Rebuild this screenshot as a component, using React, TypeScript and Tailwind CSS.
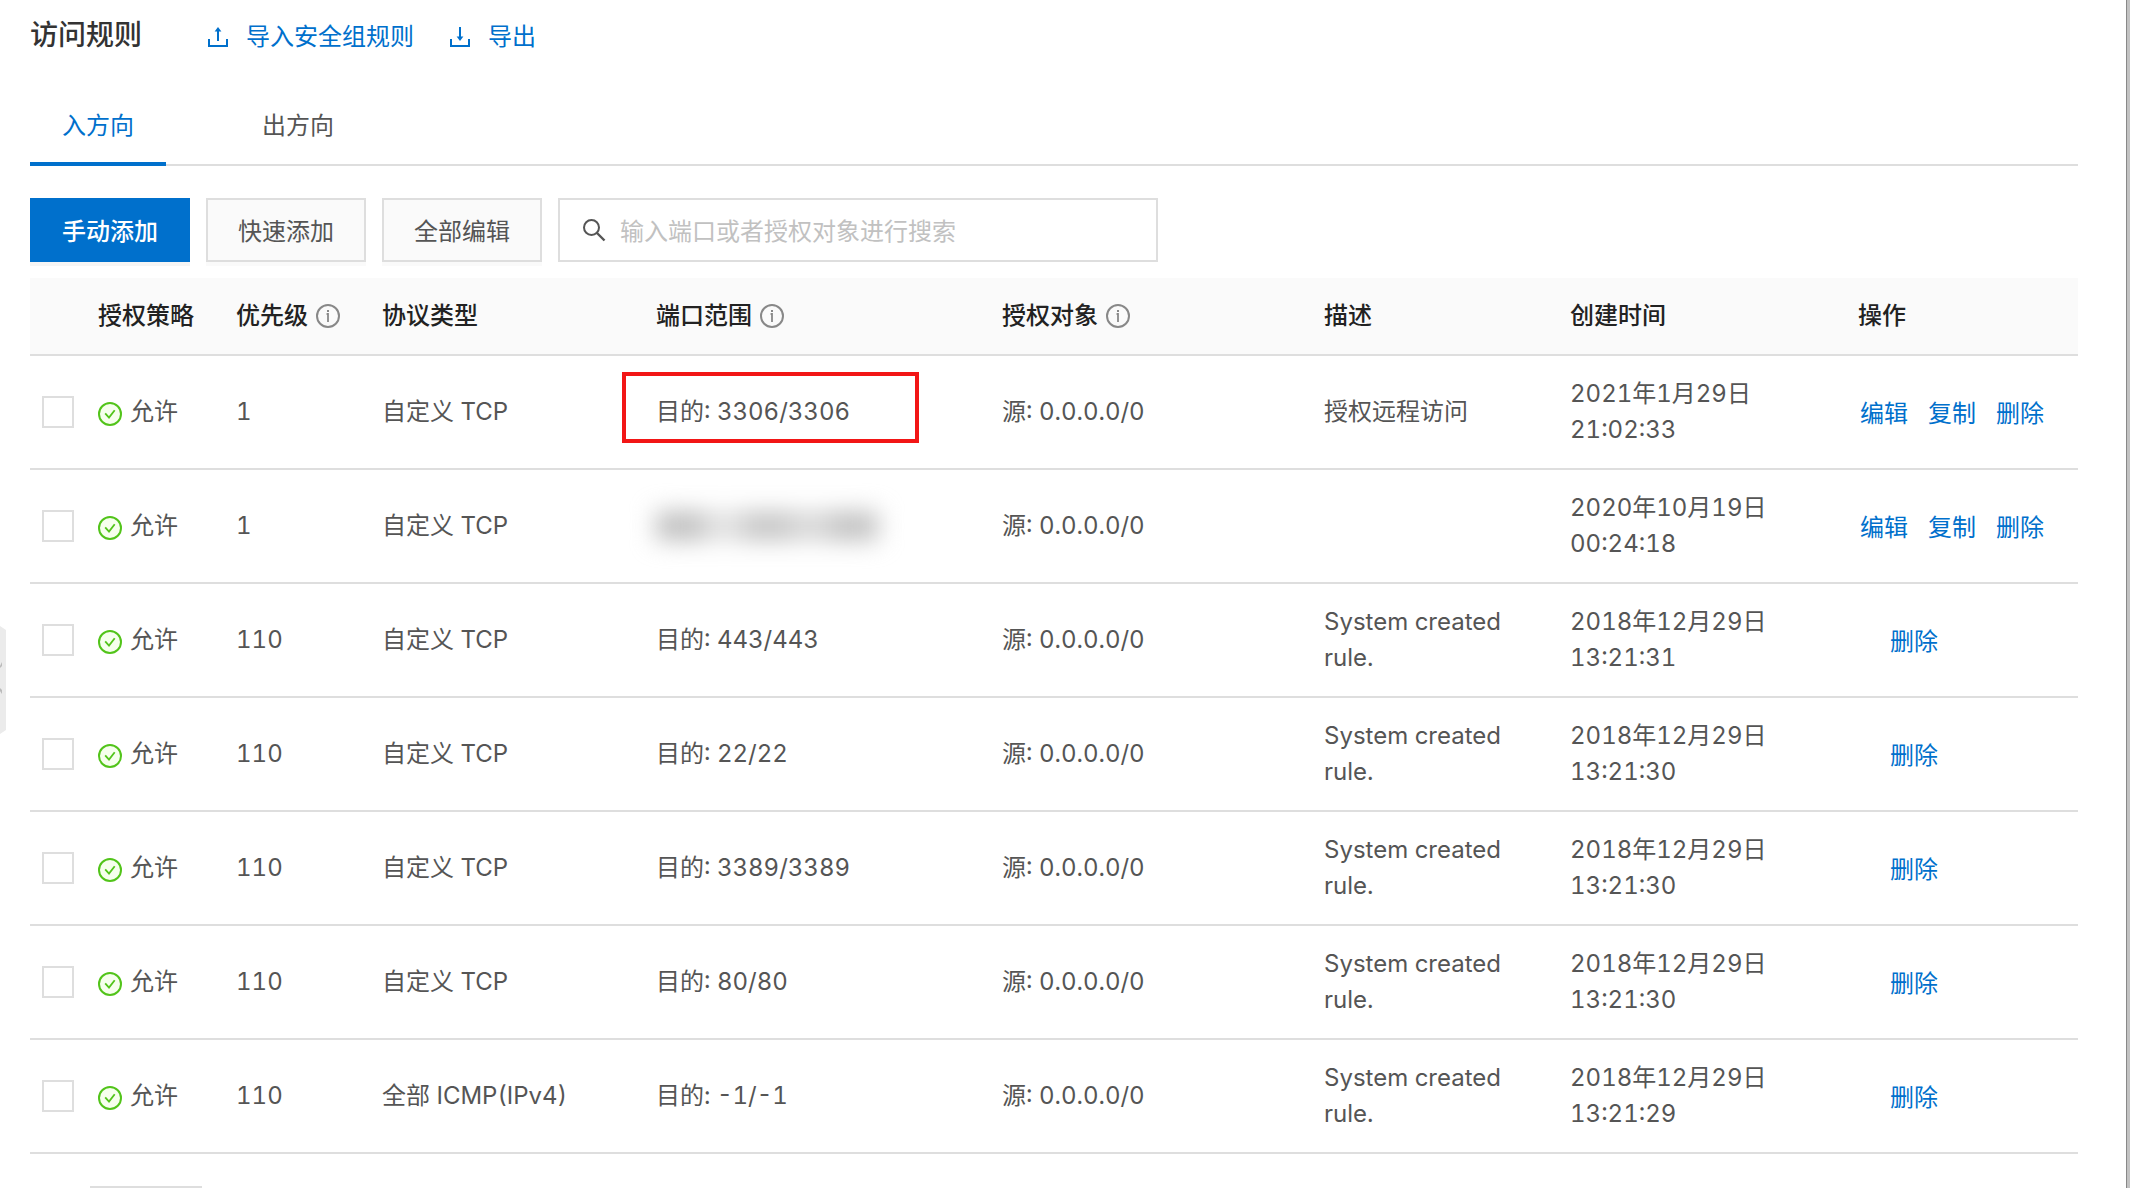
import { useState } from "react";

type Rule = {
  id: number;
  priority: string;
  protocol: string;
  port?: string;
  description?: string;
  createdAt: string;
  actions: string[];
  highlighted?: boolean;
};

const ALL_ACTIONS = ["编辑", "复制", "删除"];
const SYSTEM_RULE = "System created rule.";

const RULES: Rule[] = [
  { id: 1, priority: "1", protocol: "自定义 TCP", port: "3306/3306", description: "授权远程访问", createdAt: "2021年1月29日 21:02:33", actions: ALL_ACTIONS, highlighted: true },
  { id: 2, priority: "1", protocol: "自定义 TCP", createdAt: "2020年10月19日 00:24:18", actions: ALL_ACTIONS },
  { id: 3, priority: "110", protocol: "自定义 TCP", port: "443/443", description: SYSTEM_RULE, createdAt: "2018年12月29日 13:21:31", actions: ["删除"] },
  { id: 4, priority: "110", protocol: "自定义 TCP", port: "22/22", description: SYSTEM_RULE, createdAt: "2018年12月29日 13:21:30", actions: ["删除"] },
  { id: 5, priority: "110", protocol: "自定义 TCP", port: "3389/3389", description: SYSTEM_RULE, createdAt: "2018年12月29日 13:21:30", actions: ["删除"] },
  { id: 6, priority: "110", protocol: "自定义 TCP", port: "80/80", description: SYSTEM_RULE, createdAt: "2018年12月29日 13:21:30", actions: ["删除"] },
  { id: 7, priority: "110", protocol: "全部 ICMP(IPv4)", port: "-1/-1", description: SYSTEM_RULE, createdAt: "2018年12月29日 13:21:29", actions: ["删除"] },
];

const COLUMNS = [
  { title: "授权策略", width: "w-[138px]" },
  { title: "优先级", width: "w-[146px]", info: true },
  { title: "协议类型", width: "w-[274px]" },
  { title: "端口范围", width: "w-[346px]", info: true },
  { title: "授权对象", width: "", info: true },
  { title: "描述", width: "w-[246px]" },
  { title: "创建时间", width: "w-[288px]" },
  { title: "操作", width: "w-[236px]" },
];

const UploadIcon = () => (
  <svg width="20" height="20" viewBox="0 0 20 20" fill="none" aria-hidden="true">
    <path d="M1 12v7h18v-7" stroke="currentColor" strokeWidth="2" />
    <path d="M10 14V3" stroke="currentColor" strokeWidth="2" />
    <path d="M10 0l3.4 4.5H6.6z" fill="currentColor" />
  </svg>
);

const DownloadIcon = () => (
  <svg width="20" height="20" viewBox="0 0 20 20" fill="none" aria-hidden="true">
    <path d="M1 12v7h18v-7" stroke="currentColor" strokeWidth="2" />
    <path d="M10 0v11" stroke="currentColor" strokeWidth="2" />
    <path d="M10 14l3.4-4.5H6.6z" fill="currentColor" />
  </svg>
);

const InfoIcon = () => (
  <svg width="24" height="24" viewBox="0 0 24 24" fill="none" className="text-[#888]" aria-hidden="true">
    <circle cx="12" cy="12" r="11" stroke="currentColor" strokeWidth="2" />
    <path d="M10.6 10H12v8" stroke="currentColor" strokeWidth="1.8" />
    <path d="M11 6h2v2h-2z" fill="currentColor" />
  </svg>
);

const AllowIcon = () => (
  <svg width="24" height="24" viewBox="0 0 24 24" fill="none" aria-hidden="true">
    <circle cx="12" cy="12" r="11" fill="#f6ffed" stroke="#52c41a" strokeWidth="2" />
    <path d="M7.2 11.4l3.8 4.2 5.7-7.4" stroke="#52c41a" strokeWidth="1.8" />
  </svg>
);

const SearchIcon = () => (
  <svg width="24" height="24" viewBox="0 0 24 24" fill="none" aria-hidden="true">
    <circle cx="9.5" cy="9.5" r="7.5" stroke="#555" strokeWidth="2" />
    <path d="M15 15l7.5 7.5" stroke="#555" strokeWidth="2.4" />
  </svg>
);

const PortCell = ({ rule }: { rule: Rule }) => {
  if (!rule.port) {
    return (
      <div className="flex h-7 w-[222px] items-center blur-[12px]" aria-hidden="true">
        <div className="h-7 w-12 bg-[#bcbcbc]" />
        <div className="h-7 w-10 bg-[#dedede]" />
        <div className="h-7 w-12 bg-[#c2c2c2]" />
        <div className="h-7 w-10 bg-[#d4d4d4]" />
        <div className="h-7 w-12 bg-[#bebebe]" />
      </div>
    );
  }

  return (
    <div className="relative">
      目的: {rule.port}
      {rule.highlighted && (
        <div className="absolute -top-[22px] -left-[34px] h-[71px] w-[297px] border-4 border-[#f21616]" />
      )}
    </div>
  );
};

const App = () => {
  const [direction, setDirection] = useState("入方向");
  const [keyword, setKeyword] = useState("");

  return (
    <div className="relative flex h-screen overflow-hidden bg-white font-[Inter,'Noto_Sans_CJK_SC',sans-serif] text-2xl leading-9 text-[#555] tabular-nums">
      {/* Collapsed side panel handle */}
      <button type="button" aria-label="展开" className="absolute top-[626px] left-0">
        <svg width="6" height="108" viewBox="0 0 6 108" fill="none" aria-hidden="true">
          <path d="M0 0l6 4v100l-6 4z" fill="#ebebeb" />
          <path d="M0 40l2-4v4l-2 2zM0 62l2 2v4l-2-3z" fill="#bbb" />
        </svg>
      </button>

      <main className="min-w-0 flex-1 pr-12 pl-[30px]">
        <header className="flex h-[70px] items-center">
          <h1 className="mr-[66px] text-[28px] font-medium text-[#333]">访问规则</h1>
          <div className="flex gap-9 pt-1 text-[#0070cc]">
            <a href="#import" className="flex items-center gap-[18px]">
              <UploadIcon />
              导入安全组规则
            </a>
            <a href="#export" className="flex items-center gap-[18px]">
              <DownloadIcon />
              导出
            </a>
          </div>
        </header>

        <div role="tablist" className="mt-4 flex h-20 gap-16 border-b-2 border-[#dedede]">
          {["入方向", "出方向"].map((tab) => (
            <button
              key={tab}
              type="button"
              role="tab"
              aria-selected={direction === tab}
              onClick={() => setDirection(tab)}
              className={`-mb-[2px] border-b-4 px-8 pt-1 ${
                direction === tab ? "border-[#0070cc] text-[#0070cc]" : "border-transparent"
              }`}>
              {tab}
            </button>
          ))}
        </div>

        <div className="mt-8 flex gap-4">
          <button type="button" className="h-16 bg-[#0070cc] px-8 pt-1 font-medium text-white shadow-[0_4px_0_#f5f5f5]">
            手动添加
          </button>
          <button type="button" className="h-16 border-2 border-[#dedede] bg-[#fafafa] px-[30px] pt-1 shadow-[0_4px_0_#fafafa]">
            快速添加
          </button>
          <button type="button" className="h-16 border-2 border-[#dedede] bg-[#fafafa] px-[30px] pt-1 shadow-[0_4px_0_#fafafa]">
            全部编辑
          </button>
          <label className="flex h-16 w-[600px] items-center gap-[14px] border-2 border-[#dedede] px-[22px]">
            <SearchIcon />
            <input
              type="text"
              aria-label="搜索"
              value={keyword}
              onChange={(e) => setKeyword(e.target.value)}
              placeholder="输入端口或者授权对象进行搜索"
              className="min-w-0 flex-1 pt-1 outline-none placeholder:text-[#c1c1c1]"
            />
          </label>
        </div>

        <table className="mt-4 w-full table-fixed border-separate border-spacing-0 text-left [&_td]:border-b-2 [&_td]:border-[#dedede] [&_th]:border-b-2 [&_th]:border-[#dedede]">
          <thead>
            <tr className="h-[78px] bg-[#fafafa] text-[#222]">
              <th className="w-[52px]" />
              {COLUMNS.map((column) => (
                <th key={column.title} className={`px-4 font-medium whitespace-nowrap ${column.width}`}>
                  <div className="flex items-center gap-2">
                    {column.title}
                    {column.info && <InfoIcon />}
                  </div>
                </th>
              ))}
            </tr>
          </thead>
          <tbody>
            {RULES.map((rule) => (
              <tr key={rule.id} className="h-[114px]">
                <td className="pl-3">
                  <input
                    type="checkbox"
                    aria-label={`选择规则 ${rule.id}`}
                    className="block size-8 appearance-none border-2 border-[#dedede] bg-white checked:bg-[#0070cc]"
                  />
                </td>
                <td className="px-4">
                  <div className="flex items-center gap-2">
                    <span className="pt-1">
                      <AllowIcon />
                    </span>
                    允许
                  </div>
                </td>
                <td className="px-4">{rule.priority}</td>
                <td className="px-4">{rule.protocol}</td>
                <td className="px-4">
                  <PortCell rule={rule} />
                </td>
                <td className="px-4">源: 0.0.0.0/0</td>
                <td className="px-4">{rule.description}</td>
                <td className="px-4">{rule.createdAt}</td>
                <td className={rule.actions.length > 1 ? "px-[18px]" : "px-12"}>
                  <div className="flex gap-5 pt-1 whitespace-nowrap text-[#0070cc]">
                    {rule.actions.map((action) => (
                      <a key={action} href={`#rule-${rule.id}`}>
                        {action}
                      </a>
                    ))}
                  </div>
                </td>
              </tr>
            ))}
          </tbody>
        </table>

        <div className="mt-8 ml-[60px] h-16 w-28 border-2 border-[#dedede]" />
      </main>

      <div className="w-1 border-l border-[#888] bg-[#c2c2c2]" />
    </div>
  );
};

export default App;
